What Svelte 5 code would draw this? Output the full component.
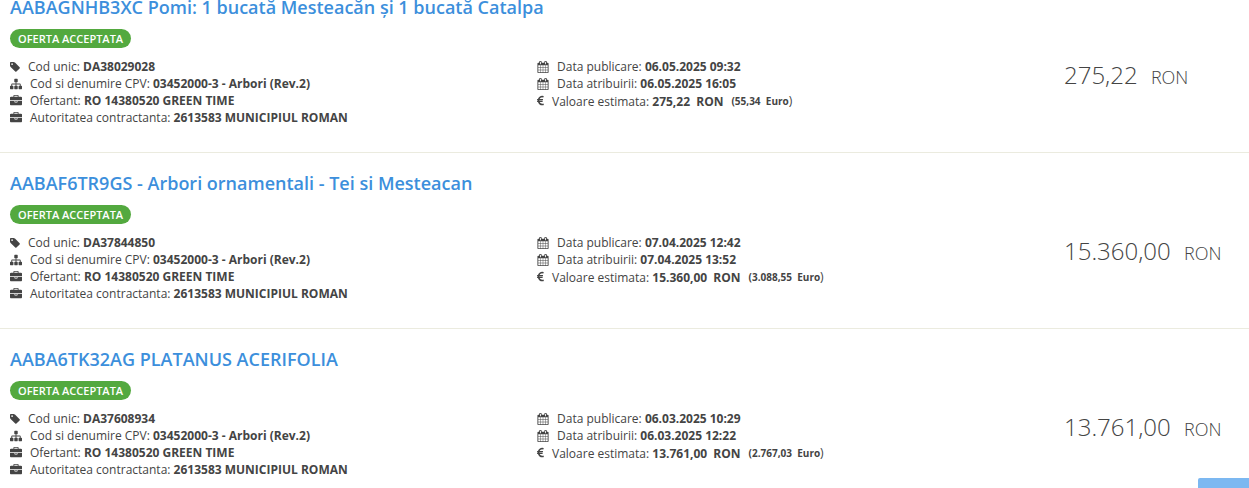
<script lang="ts">
	type Acquisition = {
		title: string;
		code: string;
		published: string;
		awarded: string;
		value: string;
		euro: string;
	};

	const acquisitions: Acquisition[] = [
		{
			title: 'AABAGNHB3XC Pomi: 1 bucată Mesteacăn și 1 bucată Catalpa',
			code: 'DA38029028',
			published: '06.05.2025 09:32',
			awarded: '06.05.2025 16:05',
			value: '275,22',
			euro: '55,34',
		},
		{
			title: 'AABAF6TR9GS - Arbori ornamentali - Tei si Mesteacan',
			code: 'DA37844850',
			published: '07.04.2025 12:42',
			awarded: '07.04.2025 13:52',
			value: '15.360,00',
			euro: '3.088,55',
		},
		{
			title: 'AABA6TK32AG PLATANUS ACERIFOLIA',
			code: 'DA37608934',
			published: '06.03.2025 10:29',
			awarded: '06.03.2025 12:22',
			value: '13.761,00',
			euro: '2.767,03',
		},
	];

	const icons = {
		tag: {
			box: '0 0 1536 1792',
			width: 10,
			d: 'M448 448q0-53-37.5-90.5t-90.5-37.5-90.5 37.5-37.5 90.5 37.5 90.5 90.5 37.5 90.5-37.5 37.5-90.5zm1067 576q0 53-37 90l-491 492q-39 37-91 37-53 0-90-37l-715-716q-38-37-64.5-101t-26.5-117v-416q0-52 38-90t90-38h416q53 0 117 26.5t102 64.5l715 714q37 39 37 91z',
		},
		sitemap: {
			box: '0 0 1792 1792',
			width: 12,
			d: 'M1792 1248v320q0 40-28 68t-68 28h-320q-40 0-68-28t-28-68v-320q0-40 28-68t68-28h96v-192h-512v192h96q40 0 68 28t28 68v320q0 40-28 68t-68 28h-320q-40 0-68-28t-28-68v-320q0-40 28-68t68-28h96v-192h-512v192h96q40 0 68 28t28 68v320q0 40-28 68t-68 28h-320q-40 0-68-28t-28-68v-320q0-40 28-68t68-28h96v-192q0-52 38-90t90-38h512v-192h-96q-40 0-68-28t-28-68v-320q0-40 28-68t68-28h320q40 0 68 28t28 68v320q0 40-28 68t-68 28h-96v192h512q52 0 90 38t38 90v192h96q40 0 68 28t28 68z',
		},
		briefcase: {
			box: '0 0 1792 1792',
			width: 12,
			d: 'M640 256h512v-128h-512v128zm1152 640v480q0 66-47 113t-113 47h-1472q-66 0-113-47t-47-113v-480h672v160q0 26 19 45t45 19h320q26 0 45-19t19-45v-160h672zm-768 0v128h-256v-128h256zm768-480v384h-1792v-384q0-66 47-113t113-47h352v-160q0-40 28-68t68-28h576q40 0 68 28t28 68v160h352q66 0 113 47t47 113z',
		},
		calendar: {
			box: '0 0 1792 1792',
			width: 12,
			d: 'M192 1664h288v-288h-288v288zm352 0h320v-288h-320v288zm-352-352h288v-320h-288v320zm352 0h320v-320h-320v320zm-352-384h288v-288h-288v288zm736 736h320v-288h-320v288zm-384-736h320v-288h-320v288zm768 736h288v-288h-288v288zm-384-352h320v-320h-320v320zm-352-864v-288q0-13-9.5-22.5t-22.5-9.5h-64q-13 0-22.5 9.5t-9.5 22.5v288q0 13 9.5 22.5t22.5 9.5h64q13 0 22.5-9.5t9.5-22.5zm736 864h288v-320h-288v320zm-384-384h320v-288h-320v288zm384 0h288v-288h-288v288zm32-480v-288q0-13-9.5-22.5t-22.5-9.5h-64q-13 0-22.5 9.5t-9.5 22.5v288q0 13 9.5 22.5t22.5 9.5h64q13 0 22.5-9.5t9.5-22.5zm384-64v1280q0 52-38 90t-90 38h-1408q-52 0-90-38t-38-90v-1280q0-52 38-90t90-38h128v-96q0-66 47-113t113-47h64q66 0 113 47t47 113v96h384v-96q0-66 47-113t113-47h64q66 0 113 47t47 113v96h128q52 0 90 38t38 90z',
		},
		euro: {
			box: '384 0 1024 1792',
			width: 7,
			d: 'M1360 1307l35 159q3 12-3 22.5t-17 14.5l-5 1q-4 2-10.5 3.5t-16 4.5-21.5 5.5-25.5 5-30 5-33.5 4.5-36.5 3-38.5 1q-234 0-409-130.5t-238-351.5h-95q-13 0-22.5-9.5t-9.5-22.5v-113q0-13 9.5-22.5t22.5-9.5h66q-2-57 1-105h-67q-14 0-23-9t-9-23v-114q0-14 9-23t23-9h98q67-210 243.5-338t400.5-128q102 0 194 23 11 3 20 15 6 11 3 24l-43 159q-3 13-14 19.5t-24 2.5l-4-1q-4-1-11.5-2.5l-17.5-3.5-22.5-3.5-26-3-29-2.5-29.5-1q-126 0-226 64t-150 176h468q16 0 25 12 10 12 7 26l-24 114q-5 26-32 26h-488q-3 37 0 105h459q15 0 25 12 9 12 6 27l-24 112q-2 11-11 18.5t-20 7.5h-387q48 117 149.5 185.5t228.5 68.5q18 0 36-1.5t33.5-3.5 29.5-4.5 24.5-5 18.5-4.5l12-3 5-2q13-5 26 2 12 7 15 21z',
		},
	};
</script>

{#snippet icon(name: keyof typeof icons)}
	<svg viewBox={icons[name].box} width={icons[name].width} height="12" aria-hidden="true">
		<path d={icons[name].d} />
	</svg>
{/snippet}

<main>
	{#each acquisitions as item (item.code)}
		<article>
			<h2><a href="#{item.code}">{item.title}</a></h2>
			<span class="badge">OFERTA ACCEPTATA</span>

			<div class="details">
				<ul>
					<li>{@render icon('tag')}<span>Cod unic: <strong>{item.code}</strong></span></li>
					<li>{@render icon('sitemap')}<span>Cod si denumire CPV: <strong>03452000-3 - Arbori (Rev.2)</strong></span></li>
					<li>{@render icon('briefcase')}<span>Ofertant: <strong>RO 14380520 GREEN TIME</strong></span></li>
					<li>{@render icon('briefcase')}<span>Autoritatea contractanta: <strong>2613583 MUNICIPIUL ROMAN</strong></span></li>
				</ul>
				<ul>
					<li>{@render icon('calendar')}<span>Data publicare: <strong>{item.published}</strong></span></li>
					<li>{@render icon('calendar')}<span>Data atribuirii: <strong>{item.awarded}</strong></span></li>
					<li>
						{@render icon('euro')}
						<span>Valoare estimata: <strong>{item.value}&nbsp; RON</strong></span>
						<span><strong class="euro">({item.euro}&nbsp; Euro</strong>)</span>
					</li>
				</ul>
				<p class="price">{item.value} <span class="currency">RON</span></p>
			</div>
		</article>
	{/each}
</main>

<button class="to-top" aria-label="Sus"></button>

<style>
	:global(body) {
		overflow: hidden;
		background: #fff;
	}

	main {
		/* list is scrolled a little past its first title */
		margin-top: -23px;
		font-family: 'Open Sans', sans-serif;
		font-size: 12px;
		line-height: 17px;
		color: #444;
	}

	article {
		padding: 18px 0 26px 10px;
		border-bottom: 1px solid #ebebdf;
	}

	h2 {
		margin: 0 0 10px;
		font-size: 18px;
		font-weight: 600;
		line-height: 24px;
	}

	a {
		color: #3c8fdc;
		text-decoration: none;
	}

	a:hover {
		text-decoration: underline;
	}

	.badge {
		display: block;
		width: fit-content;
		padding: 0 8px;
		border-radius: 10px;
		background: #53a93f;
		color: #fff;
		font-size: 11px;
		font-weight: 600;
		line-height: 19px;
	}

	.details {
		display: grid;
		grid-template-columns: 1fr 1fr 185px;
		margin-top: 10px;
	}

	ul {
		list-style: none;
		margin: 0;
		padding: 0;
	}

	li {
		display: flex;
		align-items: center;
		gap: 8px;
	}

	svg {
		flex-shrink: 0;
		fill: currentColor;
	}

	strong {
		font-weight: 700;
	}

	.euro {
		font-size: 10px;
	}

	.price {
		margin: 0;
		font-size: 24px;
		font-weight: 300;
		line-height: 34px;
		white-space: nowrap;
	}

	.currency {
		margin-left: 7px;
		font-size: 18px;
	}

	.to-top {
		position: fixed;
		right: 0;
		bottom: -30px;
		width: 51px;
		height: 40px;
		padding: 0;
		border: none;
		border-radius: 2px 0 0 0;
		background: #7cb8f1;
		cursor: pointer;
	}
</style>
